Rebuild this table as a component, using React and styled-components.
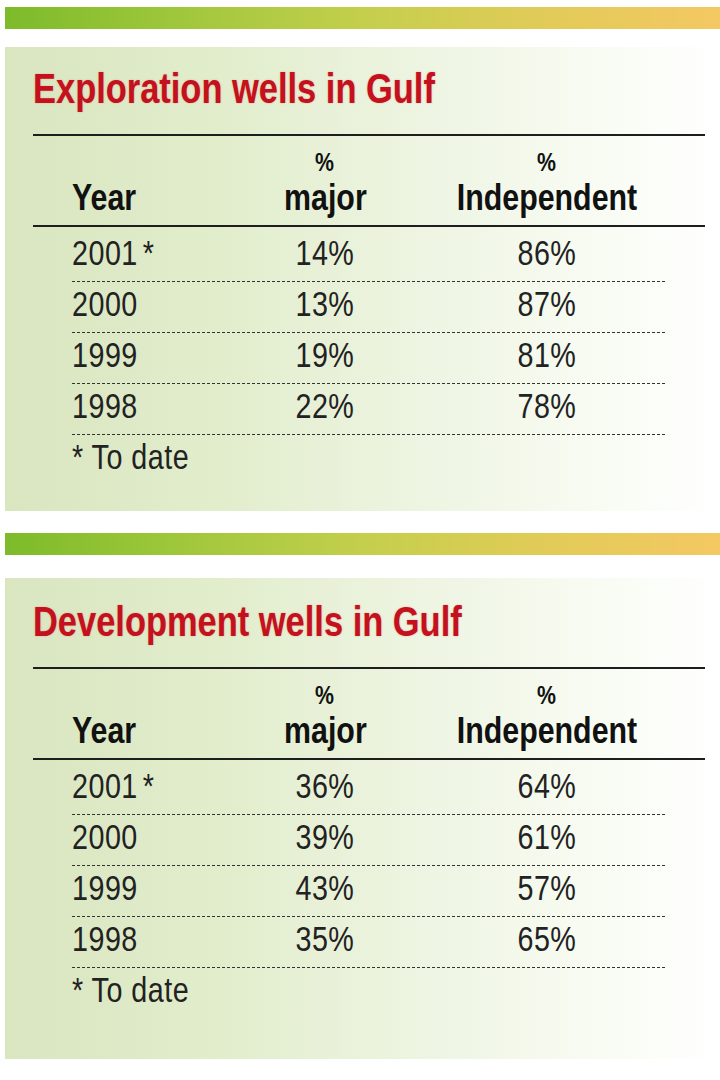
import React from 'react';
import styled, { createGlobalStyle } from 'styled-components';

const GlobalStyle = createGlobalStyle`
  body {
    margin: 0;
    background: #fff;
    font-family: "Liberation Sans", Arial, sans-serif;
  }
`;

// Arial Narrow is not installed, so narrow Liberation Sans by squeezing it
const Narrow = styled.span`
  display: inline-block;
  white-space: nowrap;
  transform: scaleX(0.82);
  transform-origin: ${props => (props.left ? 'left' : 'center')} center;
`;

const Star = styled.span`
  margin-left: 6px;
`;

const Page = styled.div`
  padding: 7px 0 0 5px;
  width: 715px;
`;

const Bar = styled.div`
  height: 22px;
  margin-top: ${props => props.gap || 0}px;
  background: linear-gradient(90deg, #7dbb2a 0%, #9cc63a 22%, #c4cf4c 50%, #e1cb58 75%, #f4c862 100%);
`;

const Panel = styled.section`
  margin-top: ${props => props.gap}px;
  padding: ${props => props.top}px 15px ${props => props.bottom}px 28px;
  background: linear-gradient(90deg, #d9e6c0 0%, #e2edcc 30%, #eef5e3 60%, #f9fcf4 85%, #ffffff 100%);
`;

const Title = styled.h2`
  margin: 0 0 21px;
  font-size: 42px;
  line-height: 48px;
  font-weight: 700;
  color: #c3111d;
  text-shadow: 0 0 2px rgba(230, 80, 80, 0.45);
`;

const Table = styled.div`
  border-top: 2px solid #1e1e1e;
  color: #222;
`;

const Columns = `
  display: grid;
  grid-template-columns: 178px 150px 1fr;
`;

const HeadRow = styled.div`
  ${Columns}
  width: 593px;
  margin: 12px 0 0;
  padding: 0 40px 7px 39px;
  border-bottom: 2px solid #1e1e1e;
  font-weight: 700;
  color: #111;
`;

const HeadCell = styled.div`
  display: flex;
  flex-direction: column;
  align-items: ${props => (props.left ? 'flex-start' : 'center')};
  justify-content: flex-end;
  padding-left: ${props => (props.shift ? 28 : 0)}px;
`;

const Pct = styled.span`
  font-size: 26px;
  line-height: 28px;
  margin-bottom: 2px;
`;

const Word = styled.span`
  font-size: 37px;
  line-height: 40px;
`;

const Row = styled.div`
  ${Columns}
  width: 593px;
  margin: ${props => (props.first ? 4 : 0)}px 0 0 39px;
  padding-bottom: 7px;
  border-bottom: 1px dashed #333;
  font-size: 35px;
  line-height: 43px;
  letter-spacing: 0.6px;
`;

const Cell = styled.div`
  text-align: ${props => (props.left ? 'left' : 'center')};
  padding-left: ${props => (props.shift ? 28 : 0)}px;
`;

const Note = styled.div`
  margin-left: 39px;
  font-size: 35px;
  line-height: 43px;
  letter-spacing: 0.6px;
  color: #222;
`;

const tables = [
  {
    title: 'Exploration wells in Gulf',
    gap: 18,
    top: 18,
    bottom: 33,
    rows: [
      ['2001', '14%', '86%', true],
      ['2000', '13%', '87%'],
      ['1999', '19%', '81%'],
      ['1998', '22%', '78%'],
    ],
  },
  {
    title: 'Development wells in Gulf',
    gap: 23,
    top: 20,
    bottom: 48,
    rows: [
      ['2001', '36%', '64%', true],
      ['2000', '39%', '61%'],
      ['1999', '43%', '57%'],
      ['1998', '35%', '65%'],
    ],
  },
];

function WellsTable({ data }) {
  return (
    <Panel gap={data.gap} top={data.top} bottom={data.bottom}>
      <Title>
        <Narrow left>{data.title}</Narrow>
      </Title>
      <Table>
        <HeadRow>
          <HeadCell left>
            <Word><Narrow left>Year</Narrow></Word>
          </HeadCell>
          <HeadCell>
            <Pct><Narrow>%</Narrow></Pct>
            <Word><Narrow>major</Narrow></Word>
          </HeadCell>
          <HeadCell shift>
            <Pct><Narrow>%</Narrow></Pct>
            <Word><Narrow>Independent</Narrow></Word>
          </HeadCell>
        </HeadRow>
        {data.rows.map((r, i) => (
          <Row key={r[0]} first={i === 0}>
            <Cell left>
              <Narrow left>
                {r[0]}
                {r[3] && <Star>*</Star>}
              </Narrow>
            </Cell>
            <Cell><Narrow>{r[1]}</Narrow></Cell>
            <Cell shift><Narrow>{r[2]}</Narrow></Cell>
          </Row>
        ))}
        <Note><Narrow left>* To date</Narrow></Note>
      </Table>
    </Panel>
  );
}

export default function App() {
  return (
    <Page>
      <GlobalStyle />
      <Bar />
      <WellsTable data={tables[0]} />
      <Bar gap={22} />
      <WellsTable data={tables[1]} />
    </Page>
  );
}
